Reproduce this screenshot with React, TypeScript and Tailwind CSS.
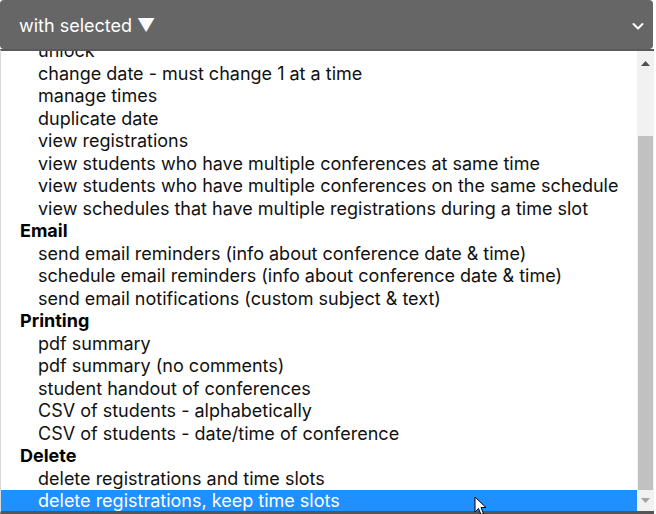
import React from 'react'

const groups: { label?: string; items: string[] }[] = [
  {
    items: [
      'unlock',
      'change date - must change 1 at a time',
      'manage times',
      'duplicate date',
      'view registrations',
      'view students who have multiple conferences at same time',
      'view students who have multiple conferences on the same schedule',
      'view schedules that have multiple registrations during a time slot',
    ],
  },
  {
    label: 'Email',
    items: [
      'send email reminders (info about conference date & time)',
      'schedule email reminders (info about conference date & time)',
      'send email notifications (custom subject & text)',
    ],
  },
  {
    label: 'Printing',
    items: [
      'pdf summary',
      'pdf summary (no comments)',
      'student handout of conferences',
      'CSV of students - alphabetically',
      'CSV of students - date/time of conference',
    ],
  },
  {
    label: 'Delete',
    items: ['delete registrations and time slots', 'delete registrations, keep time slots'],
  },
]

const selected = 'delete registrations, keep time slots'

export default function App() {
  return (
    <div className="relative w-[656px] h-[514px] bg-white overflow-hidden text-[18px] leading-[22.5px] text-[#111]" style={{ fontFamily: 'Inter, "Noto Sans", sans-serif' }}>
      <div className="w-[653px] h-[49px] bg-[#666666] rounded-[4px] flex items-center justify-between pl-[19px] pr-[8px] pt-[3px] text-white">
        <span>with selected ▼</span>
        <svg width="14" height="14" viewBox="0 0 14 14" fill="none">
          <path d="M2.5 5 L7 9.5 L11.5 5" stroke="white" strokeWidth="2" strokeLinecap="round" strokeLinejoin="round" />
        </svg>
      </div>

      <div className="w-[654px] h-[465px] flex border-t-2 border-b-[3px] border-t-[#5a5a5a] border-b-[#555] border-l border-l-[#d9d9d9]">
        <div className="flex-1 overflow-hidden">
          <div className="mt-[-11px]">
            {groups.map((g, gi) => (
              <div key={gi}>
                {g.label && <div className="pl-[19px] h-[22.5px] font-bold text-black">{g.label}</div>}
                {g.items.map((it) => (
                  <div
                    key={it}
                    className={
                      it === selected
                        ? 'pl-[37px] h-[22.5px] bg-[#1e90ff] text-white whitespace-nowrap'
                        : 'pl-[37px] h-[22.5px] whitespace-nowrap'
                    }
                  >
                    {it}
                  </div>
                ))}
              </div>
            ))}
          </div>
        </div>

        <div className="w-[17px] bg-[#f1f1f1] flex flex-col">
          <div className="h-[24px] flex items-end justify-center pb-[9px]">
            <svg width="9" height="5" viewBox="0 0 9 5">
              <path d="M0 5 L4.5 0 L9 5 Z" fill="#505050" />
            </svg>
          </div>
          <div className="flex-1 flex flex-col pt-[61px] px-[1px]">
            <div className="h-[354px] bg-[#c1c1c1]" />
          </div>
          <div className="h-[21px] flex items-center justify-center">
            <svg width="9" height="5" viewBox="0 0 9 5">
              <path d="M0 0 L4.5 5 L9 0 Z" fill="#a3a3a3" />
            </svg>
          </div>
        </div>
      </div>

      <svg className="absolute left-[474px] top-[496px]" width="13" height="20" viewBox="0 0 13 20">
        <path d="M1 1 L1 16 L4.5 12.5 L7 18.5 L9.5 17.5 L7 11.5 L12 11.5 Z" fill="white" stroke="black" strokeWidth="1" strokeLinejoin="round" />
      </svg>
    </div>
  )
}
